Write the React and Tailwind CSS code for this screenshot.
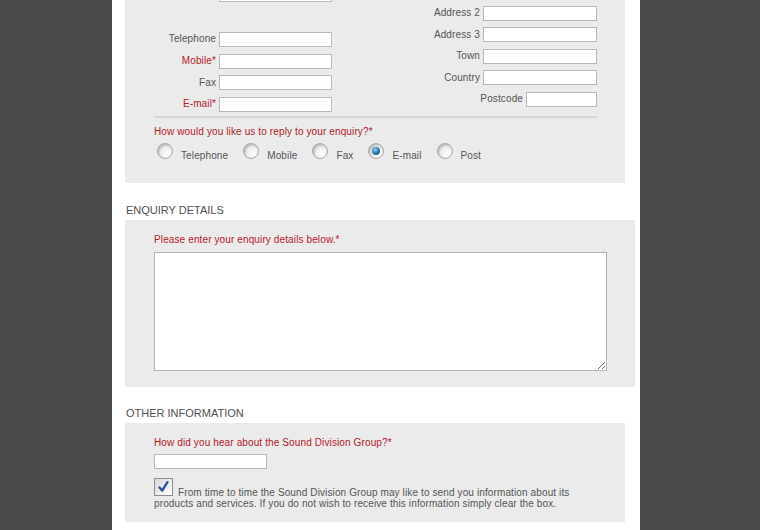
import React from 'react';

const RED = 'text-[#b3202a]';

const Field = ({ label, required, width = 'w-[113px]' }) => (
  <div className="flex h-[21.67px] items-center">
    <span className={`w-[65px] pr-[3px] text-right ${required ? RED : 'text-[#555]'}`}>
      {label}
      {label && required && '*'}
    </span>
    <input className={`h-[15px] ${width} border border-[#b9b9b9] bg-white`} />
  </div>
);

const AddrField = ({ label, width = 'w-[114px]' }) => (
  <div className="flex h-[21.5px] items-center justify-end gap-[3px]">
    <span className="text-[#555]">{label}</span>
    <input className={`h-[15px] ${width} border border-[#b9b9b9] bg-white`} />
  </div>
);

const Radio = ({ label, checked }) => (
  <label className="mr-[15px] flex items-start">
    <span className="flex h-4 w-4 items-center justify-center rounded-full border border-[#a9a9a9] bg-[radial-gradient(circle_at_65%_70%,#ffffff_0%,#eeeeee_45%,#c2c2c2_100%)] shadow-[inset_1px_1px_2px_rgba(0,0,0,0.18)]">
      {checked && (
        <span className="h-[8px] w-[8px] rounded-full bg-[radial-gradient(circle_at_40%_35%,#9ad6f2_0%,#2a7fb0_45%,#0b3a58_100%)]" />
      )}
    </span>
    <span className="ml-[8px] pt-[6.7px] leading-[12px] text-[#555]">{label}</span>
  </label>
);

export default function App() {
  return (
    <div className="h-[530px] w-[760px] overflow-hidden bg-[#4a4a4a] font-['Liberation_Sans',Arial,sans-serif] text-[10px] leading-[12px] tracking-[0.12px]">
      <div className="ml-[112px] flow-root h-full w-[528px] bg-white pl-[13px]">
        {/* CONTACT DETAILS (scrolled, top rows out of view) */}
        <div className="-mt-[40px] w-[500px] bg-[#ebebeb] pb-[20.6px] pl-[29px] pr-[28px] pt-[21px]">
          <div className="flex items-start">
            <div className="mt-[3px] w-[178px]">
              <Field label="" required />
              <div className="h-[23px]" />
              <Field label="Telephone" />
              <Field label="Mobile" required />
              <Field label="Fax" />
              <Field label="E-mail" required />
            </div>
            <div className="flex-1">
              <AddrField label="" />
              <AddrField label="Address 2" />
              <AddrField label="Address 3" />
              <AddrField label="Town" />
              <AddrField label="Country" />
              <AddrField label="Postcode" width="w-[71px]" />
            </div>
          </div>
          <div className="mt-[0.7px] h-[2px] bg-[#d7d7d7]" />
          <p className={`mt-[7.7px] ${RED}`}>How would you like us to reply to your enquiry?*</p>
          <div className="mt-[5.8px] flex pl-[3px]">
            <Radio label="Telephone" />
            <Radio label="Mobile" />
            <Radio label="Fax" />
            <Radio label="E-mail" checked />
            <Radio label="Post" />
          </div>
        </div>

        {/* ENQUIRY DETAILS */}
        <h3 className="mt-[21.7px] pl-[1px] text-[11px] leading-[13px] tracking-normal text-[#505050]">ENQUIRY DETAILS</h3>
        <div className="mt-[2.3px] w-[510px] bg-[#ebebeb] pb-[16px] pl-[29px] pt-[14.7px]">
          <p className={RED}>Please enter your enquiry details below.*</p>
          <textarea className="mt-[5.3px] block h-[119px] w-[453px] border border-[#b5b5b5] bg-white" />
        </div>

        {/* OTHER INFORMATION */}
        <h3 className="mt-[20.7px] pl-[1px] text-[11px] leading-[13px] tracking-normal text-[#505050]">OTHER INFORMATION</h3>
        <div className="mt-[2.3px] w-[500px] bg-[#ebebeb] pb-[13px] pl-[29px] pr-[28px] pt-[14.7px]">
          <p className={RED}>How did you hear about the Sound Division Group?*</p>
          <input className="mt-[4.3px] block h-[15px] w-[113px] border border-[#b9b9b9] bg-white" />
          <p className="mt-[9px] leading-[11px] text-[#555]">
            <span className="mr-[5px] inline-block h-[18px] w-[19px] border border-[#8e8e8e] bg-[linear-gradient(135deg,#d6d6d6,#ffffff)] align-baseline">
              <svg viewBox="0 0 19 18" className="h-full w-full">
                <path d="M5 9.5 L8 13 L14 3.5" fill="none" stroke="#2b4fa0" strokeWidth="2.6" strokeLinecap="round" strokeLinejoin="round" />
              </svg>
            </span>
            From time to time the Sound Division Group may like to send you information about its products and services. If you do not wish to receive this information simply clear the box.
          </p>
        </div>
      </div>
    </div>
  );
}
